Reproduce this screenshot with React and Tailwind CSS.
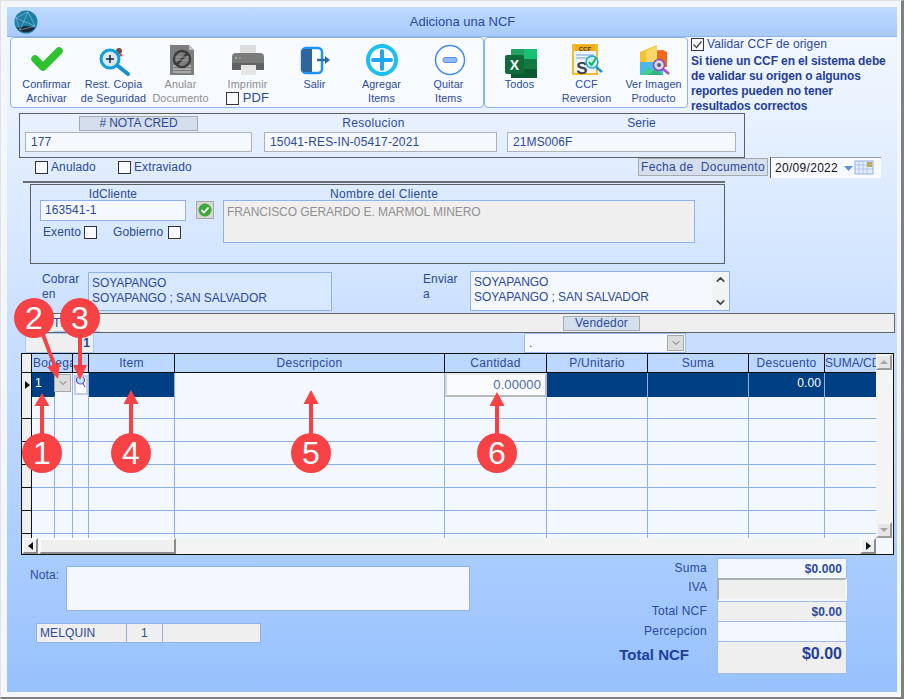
import React from "react";
import { ChevronDown, ChevronUp } from "lucide-react";

const rows = [0, 1, 2, 3, 4, 5, 6];

function CheckIcon() {
  return (
    <svg width="36" height="32" viewBox="0 0 36 32" className="overflow-visible">
      <path d="M6 14 L14 22 L30 6" fill="none" stroke="#2fc22f" strokeWidth="7.5" strokeLinecap="round" strokeLinejoin="round" />
    </svg>
  );
}

function RestoreIcon() {
  return (
    <svg width="36" height="32" viewBox="0 0 36 32" className="overflow-visible">
      <circle cx="23" cy="6" r="3" fill="#7a4a4a" />
      <circle cx="25" cy="10" r="1.5" fill="#e5484d" />
      <path d="M22 21 L32 29" stroke="#1a8fd0" strokeWidth="4" strokeLinecap="round" />
      <circle cx="14" cy="14" r="9" fill="#d9e8ee" stroke="#0ea0d8" strokeWidth="3" />
      <path d="M10 14 H18 M14 10 V18" stroke="#1c2430" strokeWidth="1.5" />
    </svg>
  );
}

function VoidIcon() {
  return (
    <svg width="36" height="32" viewBox="0 0 36 32" className="overflow-visible">
      <path d="M7 0 H26 L31 5 V30 H7 Z" fill="#7d7d7d" />
      <path d="M26 0 L31 5 H26 Z" fill="#c2c2c2" />
      <path d="M10 21 H28 M10 24 H28 M10 27 H28" stroke="#d5d5d5" strokeWidth="1" />
      <circle cx="19" cy="14" r="8" fill="none" stroke="#3c3c3c" strokeWidth="2.5" />
      <path d="M13 20 L25 8" stroke="#3c3c3c" strokeWidth="2.5" />
      <path d="M12 15 H26 M12 12 H26" stroke="#a8a8a8" strokeWidth="0.8" />
    </svg>
  );
}

function PrinterIcon() {
  return (
    <svg width="36" height="32" viewBox="0 0 36 32" className="overflow-visible">
      <rect x="10" y="0" width="16" height="10" fill="#dcdcdc" />
      <path d="M6 8 H30 Q34 8 34 12 V25 H2 V12 Q2 8 6 8 Z" fill="#7b7b7b" />
      <rect x="2" y="18" width="32" height="7" fill="#626262" />
      <circle cx="6" cy="13" r="1" fill="#b5b5b5" />
      <circle cx="10" cy="13" r="1" fill="#9a9a9a" />
      <rect x="11" y="20" width="15" height="10" fill="#e6e6e6" />
    </svg>
  );
}

function ExitIcon() {
  return (
    <svg width="36" height="32" viewBox="0 0 36 32" className="overflow-visible">
      <rect x="5" y="3" width="20" height="25" rx="4" fill="#fff" stroke="#1b93f5" strokeWidth="2.5" />
      <path d="M8 4 H15 V27 H8 Q4 27 4 23 V8 Q4 4 8 4 Z" fill="#30649c" />
      <path d="M20 15 H30" stroke="#2f6aa8" strokeWidth="2.5" />
      <path d="M28 11 L33 15 L28 19 Z" fill="#2f6aa8" />
    </svg>
  );
}

function PlusIcon() {
  return (
    <svg width="36" height="32" viewBox="0 0 36 32" className="overflow-visible">
      <circle cx="18" cy="15" r="14" fill="#fff" stroke="#1bc0ef" strokeWidth="4" />
      <path d="M9 15 H27 M18 6 V24" stroke="#1aa9f2" strokeWidth="4" strokeLinecap="round" />
    </svg>
  );
}

function MinusIcon() {
  return (
    <svg width="36" height="32" viewBox="0 0 36 32" className="overflow-visible">
      <circle cx="19" cy="15" r="14.5" fill="#fff" stroke="#3d8bf5" strokeWidth="1.5" />
      <rect x="12" y="12.5" width="14" height="5" rx="2" fill="#93bbf2" stroke="#5590e8" />
    </svg>
  );
}

function ExcelIcon() {
  return (
    <svg width="36" height="32" viewBox="0 0 36 32" className="overflow-visible">
      <rect x="9" y="4" width="26" height="29" rx="1" fill="#21a366" />
      <rect x="22" y="4" width="13" height="10" fill="#16c172" />
      <rect x="22" y="14" width="13" height="10" fill="#107c41" />
      <rect x="9" y="24" width="26" height="9" fill="#0b5a30" />
      <rect x="3" y="10" width="19" height="19" rx="2" fill="#0f6b3a" />
      <text x="12.5" y="24.5" textAnchor="middle" fontSize="14" fontWeight="700" fill="#fff" fontFamily="Liberation Sans">X</text>
    </svg>
  );
}

function CcfIcon() {
  return (
    <svg width="36" height="32" viewBox="0 0 36 32" className="overflow-visible">
      <rect x="3" y="-1" width="26" height="31" fill="#f5bd2e" />
      <rect x="5" y="6" width="22" height="22" fill="#eef4fb" />
      <rect x="6" y="0" width="20" height="6" fill="#f0ad16" />
      <text x="16" y="5.5" textAnchor="middle" fontSize="6" fontWeight="700" fill="#3a3a3a" fontFamily="Liberation Sans">CCF</text>
      <path d="M7 10 H25 M7 13 H22" stroke="#6da3d8" strokeWidth="1" />
      <text x="13" y="29" textAnchor="middle" fontSize="17" fontWeight="700" fill="#3b4650" fontFamily="Liberation Sans">S</text>
      <path d="M27 22 L33 27" stroke="#1c93d6" strokeWidth="2.5" />
      <circle cx="23" cy="17" r="6" fill="#c9eef5" stroke="#1fa7cf" strokeWidth="1.5" />
      <path d="M20 17 L22.5 20 L27 13" fill="none" stroke="#20b45a" strokeWidth="2" />
    </svg>
  );
}

function ImageIcon() {
  return (
    <svg width="36" height="32" viewBox="0 0 36 32" className="overflow-visible">
      <path d="M4 7 L21 0 V20 L4 24 Z" fill="#f6c22c" />
      <path d="M10 6 L27 5 L31 7 V22 H10 Z" fill="#ef6a1f" />
      <path d="M10 6 L21 1 V20 H10 Z" fill="#f8d66a" />
      <rect x="4" y="17" width="23" height="13" fill="#4cb8e8" />
      <path d="M4 30 L13 22 L21 30 Z" fill="#3ecf8e" />
      <path d="M12 30 L20 24 L27 30 Z" fill="#2fb67c" />
      <path d="M27 24 L33 29" stroke="#a04fd6" strokeWidth="2.5" />
      <circle cx="23" cy="20" r="5.5" fill="#dcd6e6" stroke="#8a4bc4" strokeWidth="1.5" />
      <circle cx="23" cy="20" r="2" fill="#55606b" />
    </svg>
  );
}

function ToolButton({ icon, line1, line2, muted, children }) {
  return (
    <div className="w-[67px] shrink-0 flex flex-col items-center pt-[7px]">
      <div className="h-[32px] flex items-start justify-center">{icon}</div>
      <div className={`text-center text-[10.8px] leading-[14px] whitespace-nowrap ${muted ? "text-[#8c8c8c]" : "text-[#2b4a9b]"}`}>
        <div>{line1}</div>
        {line2 && <div>{line2}</div>}
        {children}
      </div>
    </div>
  );
}

function Box({ checked }) {
  return (
    <span className="w-[13px] h-[13px] shrink-0 border border-[#333] bg-[#f8faff] flex items-center justify-center">
      {checked && (
        <svg width="11" height="11" viewBox="0 0 11 11">
          <path d="M1.5 5.5 L4.5 8.5 L9.5 2.5" fill="none" stroke="#444" strokeWidth="1.3" />
        </svg>
      )}
    </span>
  );
}

function ComboButton({ tall }) {
  return (
    <span className={`w-[17px] bg-[#dcdcdc] border border-[#a8a8a8] flex items-center justify-center ${tall ? "h-[18px] -ml-px" : "h-[16px]"}`}>
      <ChevronDown size={12} strokeWidth={1.5} className="text-[#444]" />
    </span>
  );
}

function Badge({ n, className }) {
  return (
    <div className={`absolute w-[40px] h-[40px] rounded-full bg-[#f64245] text-white text-[32px] leading-[40px] tracking-normal text-center ${className}`}>
      {n}
    </div>
  );
}

export default function App() {
  return (
    <div className="relative w-[904px] h-[699px] overflow-hidden bg-[#f3f6fd] border-t border-l border-t-[#e2e2e2] border-l-[#e2e2e2] border-r-[3px] border-b-2 border-r-[#808080] border-b-[#808080] pl-[6px] pt-[6px] font-['Liberation_Sans',Arial,sans-serif] text-[12px] tracking-[0.1px] text-[#2b4a9b]">
      <div className="w-[890px] h-[685px] flex flex-col bg-gradient-to-b from-[#f7faff] to-[#97c1fd]">
        {/* Title bar */}
        <div className="relative h-[30px] shrink-0 flex items-center justify-center bg-gradient-to-b from-[#bedaff] to-[#a8cbfb] text-[13px] tracking-normal border-b border-[#90b4ec]">
          <svg width="24" height="24" viewBox="0 0 24 24" className="absolute left-[7px] top-[3px]">
            <circle cx="12" cy="12" r="11.5" fill="#1d7fa6" />
            <path d="M3 18 A11.5 11.5 0 0 0 21 18 Q12 14 3 18 Z" fill="#1c2a3a" />
            <path d="M2 8 L14 2 L21 16 L6 20 Z M2 8 L21 16 M14 2 L6 20" fill="none" stroke="#a9cfe0" strokeWidth="0.5" />
          </svg>
          <span className="pl-[21px]">Adiciona una NCF</span>
        </div>

        {/* Toolbar */}
        <div className="h-[71px] shrink-0 flex ml-[3px]">
          <div className="w-[474px] h-[71px] flex pl-[2px] border border-[#8fb2ea] rounded-[4px] bg-[#f7faff]">
            <ToolButton icon={<CheckIcon />} line1="Confirmar" line2="Archivar" />
            <ToolButton icon={<RestoreIcon />} line1="Rest. Copia" line2="de Seguridad" />
            <ToolButton icon={<VoidIcon />} line1="Anular" line2="Documento" muted />
            <ToolButton icon={<PrinterIcon />} line1="Imprimir" muted>
              <div className="flex items-center justify-center gap-[4px] text-[13px] text-[#2b4a9b]">
                <Box />
                PDF
              </div>
            </ToolButton>
            <ToolButton icon={<ExitIcon />} line1="Salir" />
            <ToolButton icon={<PlusIcon />} line1="Agregar" line2="Items" />
            <ToolButton icon={<MinusIcon />} line1="Quitar" line2="Items" />
          </div>
          <div className="w-[204px] h-[71px] flex pl-[1px] border border-[#8fb2ea] rounded-[4px] bg-[#f7faff]">
            <ToolButton icon={<ExcelIcon />} line1="Todos" />
            <ToolButton icon={<CcfIcon />} line1="CCF" line2="Reversion" />
            <ToolButton icon={<ImageIcon />} line1="Ver Imagen" line2="Producto" />
          </div>
          <div className="ml-[3px] w-[200px]">
            <div className="flex items-center gap-[3px] h-[14px]">
              <Box checked />
              <span>Validar CCF de origen</span>
            </div>
            <p className="mt-[3px] font-bold leading-[15px] tracking-[-0.12px] text-[#1f3f9a] whitespace-nowrap">
              Si tiene un CCF en el sistema debe
              <br />
              de validar su origen o algunos
              <br />
              reportes pueden no tener
              <br />
              resultados correctos
            </p>
          </div>
        </div>

        {/* Nota credito */}
        <div className="relative mt-[5px] ml-[12px] w-[726px] h-[45px] shrink-0 border border-[#5c6066] flex pl-[5px] gap-[12px]">
          <div className="w-[227px] flex flex-col items-center pt-[2px]">
            <div className="w-[119px] h-[15px] leading-[13px] text-center tracking-[-0.1px] bg-[#d4deec] border border-[#a7aaae]">
              # NOTA CRED
            </div>
            <div className="mt-px w-full h-[20px] border border-[#aeb1b6] bg-[#f5f8fe] px-[5px] leading-[19px]">177</div>
          </div>
          <div className="w-[233px] flex flex-col items-center pt-[2px]">
            <div className="h-[15px] leading-[14px] pr-[14px] tracking-[0.3px]">Resolucion</div>
            <div className="mt-px w-full h-[20px] border border-[#aeb1b6] bg-[#f5f8fe] px-[5px] leading-[19px] tracking-[0.14px]">
              15041-RES-IN-05417-2021
            </div>
          </div>
          <div className="w-[229px] -ml-[2px] flex flex-col items-center pt-[2px]">
            <div className="h-[15px] leading-[14px] pl-[40px]">Serie</div>
            <div className="mt-px w-full h-[20px] border border-[#aeb1b6] bg-[#f5f8fe] px-[5px] leading-[19px]">21MS006F</div>
          </div>
        </div>

        {/* Anulado / fecha */}
        <div className="h-[23px] shrink-0 flex items-start pl-[28px] pr-[16px]">
          <div className="w-[83px] flex items-center gap-[3px] mt-[3px] leading-[13px]">
            <Box />
            Anulado
          </div>
          <div className="flex items-center gap-[3px] mt-[3px] leading-[13px]">
            <Box />
            Extraviado
          </div>
          <div className="ml-auto w-[130px] h-[18px] bg-[#d4deec] border border-[#a7aaae] text-center leading-[16px] tracking-[0.3px] whitespace-pre">
            Fecha de  Documento
          </div>
          <div className="ml-[2px] -mt-px w-[111px] h-[21px] flex items-center bg-[#f8faff] border-l border-t border-l-[#555] border-t-[#999] pl-[4px] text-[#111]">
            <span className="tracking-[0.3px]">20/09/2022</span>
            <svg width="34" height="16" viewBox="0 0 34 16" className="ml-[6px]">
              <path d="M0 6 H9 L4.5 11 Z" fill="#5c93dc" />
              <rect x="11" y="1" width="18" height="13" fill="#e4edf9" stroke="#8fb2ea" />
              <path d="M11 5 H29 M11 9 H29 M15 1 V14 M19 1 V14 M23 1 V14" stroke="#8fb2ea" strokeWidth="0.6" />
              <rect x="23" y="2" width="5" height="5" fill="#c5a65e" />
            </svg>
          </div>
        </div>

        {/* Separator */}
        <div className="ml-[16px] w-[702px] h-[2px] shrink-0 bg-[#6a6d72]" />

        {/* Cliente */}
        <div className="mt-px ml-[23px] w-[695px] h-[80px] shrink-0 border border-[#5c6066] flex pl-[9px] pt-px">
          <div className="w-[146px]">
            <div className="h-[14px] leading-[16px] text-center">IdCliente</div>
            <div className="h-[21px] border border-[#8fb2ea] bg-[#f5f8fe] px-[4px] leading-[19px]">163541-1</div>
            <div className="mt-[4px] pl-[3px] flex items-center h-[14px]">
              <span className="w-[41px]">Exento</span>
              <Box />
              <span className="ml-[16px] w-[55px]">Gobierno</span>
              <Box />
            </div>
          </div>
          <div className="ml-[10px] mt-[15px] w-[18px] h-[18px] bg-[#d6d6d6] border border-[#a8a8a8] flex items-center justify-center">
            <svg width="14" height="14" viewBox="0 0 14 14">
              <circle cx="7" cy="7" r="6.5" fill="#3fa83a" />
              <path d="M3.5 7 L6 9.5 L10.5 4.5" fill="none" stroke="#fff" strokeWidth="1.8" />
            </svg>
          </div>
          <div className="ml-[9px] w-[472px]">
            <div className="h-[14px] leading-[16px] pl-[107px] tracking-[0.3px]">Nombre del Cliente</div>
            <div className="h-[43px] border border-[#8fb2ea] bg-[#efefef] px-[3px] pt-[2px] text-[#8f8f8f] tracking-[-0.08px]">
              FRANCISCO GERARDO E. MARMOL MINERO
            </div>
          </div>
        </div>

        {/* Direcciones */}
        <div className="mt-[7px] ml-[35px] h-[41px] shrink-0 flex items-start">
          <div className="w-[46px] mt-px leading-[15px]">
            Cobrar
            <br />
            en
          </div>
          <div className="mt-px w-[244px] h-[39px] border border-[#8fb2ea] bg-[#d8e8fe] px-[3px] pt-[3px] leading-[15px] tracking-[-0.07px]">
            SOYAPANGO
            <br />
            SOYAPANGO ; SAN SALVADOR
          </div>
          <div className="ml-[91px] w-[47px] mt-px leading-[15px]">
            Enviar
            <br />a
          </div>
          <div className="relative w-[260px] h-[40px] border border-[#8fb2ea] bg-[#f5f8fe] px-[3px] pt-[3px] leading-[15px] tracking-[-0.07px]">
            SOYAPANGO
            <br />
            SOYAPANGO ; SAN SALVADOR
            <div className="absolute right-0 top-0 bottom-0 w-[17px] bg-[#f3f3f3] flex flex-col items-center justify-between py-[1px]">
              <ChevronUp size={13} strokeWidth={3} className="text-[#444]" />
              <ChevronDown size={13} strokeWidth={3} className="text-[#444]" />
            </div>
          </div>
        </div>

        {/* Barra vendedor */}
        <div className="mt-[1px] ml-[18px] w-[870px] h-[20px] shrink-0 flex items-center bg-[#efefef] border-y border-r border-[#666]">
          <span className="ml-[28px] w-[47px] h-[18px] leading-[18px] border-b border-[#a9c9f5]">TE</span>
          <div className="ml-[463px] w-[77px] h-[15px] bg-[#d4deec] border border-[#a7aaae] text-center leading-[13px] tracking-[0.2px]">Vendedor</div>
        </div>
        <div className="ml-[18px] h-[20px] shrink-0 flex">
          <div className="w-[69px] h-[20px] bg-[#efefef] border border-[#a9c9f5] text-right pr-[3px] font-bold text-[#1f3f9a] leading-[18px]">1</div>
          <div className="ml-[430px] w-[162px] h-[20px] border border-[#9dbcee] bg-[#f5f8fe] flex items-center justify-between pl-[4px] pr-px">
            <span>.</span>
            <ComboButton />
          </div>
        </div>

        {/* Grid */}
        <div className="ml-[14px] w-[873px] h-[202px] shrink-0 border border-[#111] flex flex-col bg-[#f3f7ff]">
          <div className="h-[184px] flex overflow-hidden">
            <div className="w-[854px] flex flex-col">
              <div className="h-[19px] shrink-0 grid grid-cols-[10px_41px_16px_86px_270px_102px_101px_101px_76px_51px] bg-[#bcd8ff] border-b border-[#111] leading-[18px] text-center tracking-[0.3px]">
                <div className="bg-[#efefef] border-r border-[#111]" />
                <div className="border-r border-[#111] overflow-hidden whitespace-nowrap text-left pl-[1px]">Bodega</div>
                <div className="border-r border-[#111]" />
                <div className="border-r border-[#111]">Item</div>
                <div className="border-r border-[#111]">Descripcion</div>
                <div className="border-r border-[#111]">Cantidad</div>
                <div className="border-r border-[#111]">P/Unitario</div>
                <div className="border-r border-[#111]">Suma</div>
                <div className="border-r border-[#111]">Descuento</div>
                <div className="overflow-hidden whitespace-nowrap text-left tracking-normal">SUMA/CD</div>
              </div>
              <div className="h-[23px] shrink-0 grid grid-cols-[10px_23px_18px_16px_86px_270px_102px_101px_101px_76px_51px] border-b-2 border-[#8ab0e8] text-white">
                <div className="bg-[#efefef] border-r border-b border-[#111] flex items-center justify-end pr-px">
                  <svg width="5" height="8" viewBox="0 0 5 8">
                    <path d="M0 0 L5 4 L0 8 Z" fill="#111" />
                  </svg>
                </div>
                <div className="bg-[#003f84] pl-[3px] leading-[20px]">1</div>
                <div className="bg-[#f3f7ff] border-r border-[#8ab0e8] flex items-start justify-start pt-px">
                  <ComboButton tall />
                </div>
                <div className="bg-[#f3f7ff] border-r border-[#8ab0e8] flex items-center justify-center">
                  <span className="w-[14px] h-[20px] bg-[#fbfcff] border-2 border-[#c3cfdf] flex justify-center overflow-hidden">
                    <svg width="10" height="14" viewBox="0 0 10 14" className="shrink-0 -mt-[2px]">
                      <circle cx="4.5" cy="5" r="4" fill="#b7ecf7" stroke="#7a3ff0" strokeWidth="1.2" />
                      <path d="M7 8.5 L9 12" stroke="#7a3ff0" strokeWidth="1.2" />
                    </svg>
                  </span>
                </div>
                <div className="bg-[#003f84] border-r border-[#8ab0e8]" />
                <div className="bg-[#f3f7ff] border-r border-[#8ab0e8]" />
                <div className="bg-[#fafbff] border-2 border-[#b8b8b8] border-t-[#e8e8e8] border-l-[#d8d8d8] text-right pr-[4px] text-[#4a6aa8] leading-[20px] text-[13px]">
                  0.00000
                </div>
                <div className="bg-[#003f84] border-r border-[#8ab0e8]" />
                <div className="bg-[#003f84] border-r border-[#8ab0e8]" />
                <div className="bg-[#003f84] border-r border-[#8ab0e8] text-right pr-[3px] leading-[20px]">0.00</div>
                <div className="bg-[#003f84]" />
              </div>
              {rows.map((r) => (
                <div key={r} className="h-[23px] shrink-0 grid grid-cols-[10px_23px_18px_16px_86px_270px_102px_101px_101px_76px_51px] border-b border-[#8ab0e8]">
                  <div className="bg-[#efefef] border-r border-b border-[#111] h-[23px]" />
                  <div className="border-r border-[#8ab0e8]" />
                  <div className="border-r border-[#8ab0e8]" />
                  <div className="border-r border-[#8ab0e8]" />
                  <div className="border-r border-[#8ab0e8]" />
                  <div className="border-r border-[#8ab0e8]" />
                  <div className="border-r border-[#8ab0e8]" />
                  <div className="border-r border-[#8ab0e8]" />
                  <div className="border-r border-[#8ab0e8]" />
                  <div className="border-r border-[#8ab0e8]" />
                  <div />
                </div>
              ))}
            </div>
            <div className="w-[17px] flex flex-col justify-between bg-[#f4f4f4]">
              <div className="w-[16px] h-[16px] bg-[#e6e6e6] border-2 border-t-[#f5f5f5] border-l-[#f5f5f5] border-r-[#9a9a9a] border-b-[#9a9a9a] flex items-center justify-center">
                <span className="border-x-[4px] border-b-[4px] border-x-transparent border-b-[#a5a5a5]" />
              </div>
              <div className="w-[16px] h-[16px] bg-[#e6e6e6] border-2 border-t-[#f5f5f5] border-l-[#f5f5f5] border-r-[#9a9a9a] border-b-[#9a9a9a] flex items-center justify-center">
                <span className="border-x-[4px] border-t-[4px] border-x-transparent border-t-[#a5a5a5]" />
              </div>
            </div>
          </div>
          <div className="h-[16px] flex bg-[#f4f4f4]">
            <div className="w-[16px] bg-[#efefef] border-2 border-t-[#fafafa] border-l-[#fafafa] border-r-[#8a8a8a] border-b-[#8a8a8a] flex items-center justify-center">
              <span className="border-y-[4px] border-r-[5px] border-y-transparent border-r-[#111]" />
            </div>
            <div className="ml-px w-[137px] bg-[#efefef] border-2 border-t-[#fafafa] border-l-[#fafafa] border-r-[#8a8a8a] border-b-[#8a8a8a]" />
            <div className="ml-[684px] w-[16px] bg-[#efefef] border-2 border-t-[#fafafa] border-l-[#fafafa] border-r-[#8a8a8a] border-b-[#8a8a8a] flex items-center justify-center">
              <span className="border-y-[4px] border-l-[5px] border-y-transparent border-l-[#111]" />
            </div>
            <div className="flex-1 bg-[#f3f7ff]" />
          </div>
        </div>

        {/* Pie */}
        <div className="flex-1 flex pr-[50px]">
          <div className="ml-[23px] pt-[11px]">
            <div className="flex">
              <span className="w-[36px]">Nota:</span>
              <div className="w-[404px] h-[45px] border border-[#8fb2ea] bg-[#f3f7ff]" />
            </div>
            <div className="mt-[12px] ml-[6px] flex h-[20px] leading-[18px]">
              <div className="w-[91px] border border-[#8fb2ea] bg-[#efefef] px-[3px]">MELQUIN</div>
              <div className="w-[36px] border-y border-r border-[#8fb2ea] bg-[#efefef] text-center">1</div>
              <div className="w-[98px] border-y border-r border-[#8fb2ea] bg-[#efefef]" />
            </div>
          </div>
          <div className="ml-auto pt-[3px] w-[240px]">
            <div className="flex h-[20px]">
              <span className="w-[110px] text-right pr-[10px] leading-[20px] tracking-[0.3px]">Suma</span>
              <div className="w-[130px] border-x border-t border-[#9fbce8] bg-[#f3f7ff] text-right pr-[4px] font-bold leading-[20px]">$0.000</div>
            </div>
            <div className="flex h-[23px]">
              <span className="w-[110px] text-right pr-[10px] leading-[18px]">IVA</span>
              <div className="w-[130px] border-2 border-[#a8b0bc] border-r-[#f3f6fd] border-b-[#f3f6fd] bg-[#efefef]" />
            </div>
            <div className="flex h-[20px]">
              <span className="w-[110px] text-right pr-[10px] leading-[20px] tracking-[0.2px]">Total NCF</span>
              <div className="w-[130px] border-x border-t border-[#9fbce8] bg-[#efefef] text-right pr-[4px] font-bold leading-[20px]">$0.00</div>
            </div>
            <div className="flex h-[20px]">
              <span className="w-[110px] text-right pr-[10px] leading-[20px] tracking-[0.3px]">Percepcion</span>
              <div className="w-[130px] border-x border-t border-[#9fbce8] bg-[#f3f7ff]" />
            </div>
            <div className="flex h-[33px]">
              <span className="w-[110px] text-right pr-[28px] pt-[3px] text-[15px] tracking-normal font-bold text-[#1f3f9a] whitespace-nowrap">Total NCF</span>
              <div className="w-[130px] border border-[#9fbce8] bg-[#efefef] text-right pr-[4px] text-[16px] tracking-normal font-bold text-[#1f3f9a] leading-[24px]">$0.00</div>
            </div>
          </div>
        </div>
      </div>

      {/* Flechas y numeros de la anotacion */}
      <svg width="904" height="699" viewBox="0 0 904 699" className="absolute left-[-1px] top-[-1px] pointer-events-none">
        <g fill="#f64245" stroke="none">
          <path d="M40 440 V406 H34.5 L42 393 L49.5 406 H44 V440 Z" />
          <path d="M129 440 V404 H123.5 L131 390 L138.5 404 H133 V440 Z" />
          <path d="M309 440 V404 H303.5 L311 390 L318.5 404 H313 V440 Z" />
          <path d="M495 440 V406 H489.5 L497 392 L504.5 406 H499 V440 Z" />
          <path d="M78 330 V365 H73 L80 380 L87 365 H82 V330 Z" />
          <path d="M39 330 L52.5 365 L47 367 L58 379 L60 363 L56 364 L43 329 Z" />
        </g>
      </svg>
      <Badge n="1" className="left-[21px] top-[432px]" />
      <Badge n="2" className="left-[13px] top-[297px]" />
      <Badge n="3" className="left-[59px] top-[297px]" />
      <Badge n="4" className="left-[110px] top-[432px]" />
      <Badge n="5" className="left-[290px] top-[432px]" />
      <Badge n="6" className="left-[476px] top-[432px]" />
    </div>
  );
}
